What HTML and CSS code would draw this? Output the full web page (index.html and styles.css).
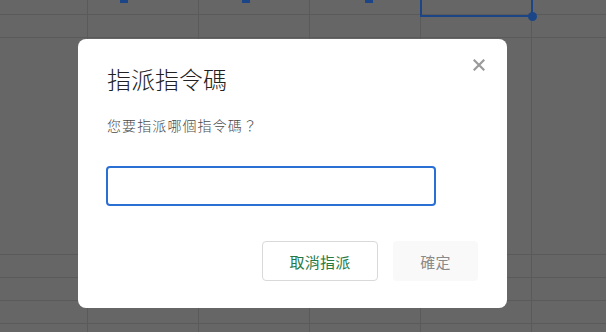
FILE: index.html
```html
<!DOCTYPE html>
<html lang="zh-Hant">
<head>
<meta charset="utf-8">
<link rel="stylesheet" href="styles.css">
</head>
<body>
<div class="sheet">
  <span class="mark m1"></span>
  <span class="mark m2"></span>
  <span class="mark m3"></span>
  <span class="sel"><span class="handle"></span></span>
</div>
<div class="overlay">
  <div class="dialog" role="dialog">
    <button class="close" aria-label="關閉">
      <svg width="12" height="12" viewBox="0 0 12 12"><path d="M1.5 1.5L10.5 10.5M10.5 1.5L1.5 10.5" stroke="#9a9a9a" stroke-width="2.2" stroke-linecap="square"/></svg>
    </button>
    <h1 class="title">指派指令碼</h1>
    <p class="prompt">您要指派哪個指令碼？</p>
    <input class="field" type="text">
    <div class="actions">
      <button class="btn cancel">取消指派</button>
      <button class="btn ok">確定</button>
    </div>
  </div>
</div>
</body>
</html>
```
FILE: styles.css
```css
html, body {
  margin: 0;
  padding: 0;
  width: 606px;
  height: 332px;
  overflow: hidden;
}
body {
  font-family: "Noto Sans CJK TC", "Noto Sans", sans-serif;
  background: #666666;
  position: relative;
}
.sheet {
  width: 606px;
  height: 332px;
  background-color: #666666;
  background-image:
    linear-gradient(#5a5a5a, #5a5a5a),
    linear-gradient(#5a5a5a, #5a5a5a),
    linear-gradient(#5a5a5a, #5a5a5a),
    linear-gradient(#5a5a5a, #5a5a5a),
    linear-gradient(#5a5a5a, #5a5a5a),
    linear-gradient(#5a5a5a, #5a5a5a),
    linear-gradient(#5a5a5a, #5a5a5a),
    linear-gradient(#5a5a5a, #5a5a5a),
    linear-gradient(#5a5a5a, #5a5a5a),
    linear-gradient(#5a5a5a, #5a5a5a),
    linear-gradient(#5a5a5a, #5a5a5a);
  background-repeat: no-repeat;
  background-size:
    1px 100%, 1px 100%, 1px 100%, 1px 100%, 1px 100%,
    100% 1px, 100% 1px, 100% 1px, 100% 1px, 100% 1px, 100% 1px;
  background-position:
    87px 0, 198px 0, 309px 0, 420px 0, 531px 0,
    0 14px, 0 37px, 0 254px, 0 277px, 0 300px, 0 323px;
}
.mark {
  position: absolute;
  top: 0;
  width: 8px;
  height: 3px;
  background: #1c4587;
}
.m1 { left: 120px; }
.m2 { left: 242px; }
.m3 { left: 365px; }
.sel {
  position: absolute;
  left: 420px;
  top: -10px;
  width: 109px;
  height: 23px;
  border: 2px solid #1c4587;
}
.handle {
  position: absolute;
  right: -6px;
  bottom: -6px;
  width: 9px;
  height: 9px;
  border-radius: 50%;
  background: #1c4587;
}
.overlay {
  position: absolute;
  inset: 0;
  padding: 39px 0 0 78px;
}
.dialog {
  position: relative;
  box-sizing: border-box;
  width: 429px;
  height: 269px;
  background: #ffffff;
  border-radius: 8px;
  padding: 24px 29px 0 28px;
  display: flex;
  flex-direction: column;
}
.close {
  position: absolute;
  right: 21px;
  top: 19px;
  width: 14px;
  height: 14px;
  padding: 0;
  border: 0;
  background: none;
  display: flex;
  align-items: center;
  justify-content: center;
}
.title {
  margin: 0 0 0 1px;
  font-size: 24px;
  font-weight: 300;
  line-height: 32px;
  color: #222222;
}
.prompt {
  margin: 20px 0 0 1px;
  font-size: 14px;
  font-weight: 300;
  line-height: 20px;
  color: #4a4a4a;
  letter-spacing: 1.1px;
}
.field {
  box-sizing: border-box;
  margin: 31px 0 0 0;
  width: 330px;
  height: 40px;
  border: 2px solid #2a6fd3;
  border-radius: 4px;
  outline: none;
  padding: 0 8px;
  font: inherit;
}
.actions {
  margin-top: 35px;
  display: flex;
  justify-content: flex-end;
  gap: 15px;
}
.btn {
  box-sizing: border-box;
  height: 40px;
  font-family: inherit;
  font-size: 15px;
  border-radius: 4px;
  padding: 0;
}
.cancel {
  width: 116px;
  border: 1px solid #d9d9d9;
  background: #ffffff;
  color: #257a44;
  letter-spacing: 0.3px;
}
.ok {
  width: 85px;
  border: 0;
  background: #f9f9f9;
  color: #8a8a8a;
  letter-spacing: 0.3px;
}
```
